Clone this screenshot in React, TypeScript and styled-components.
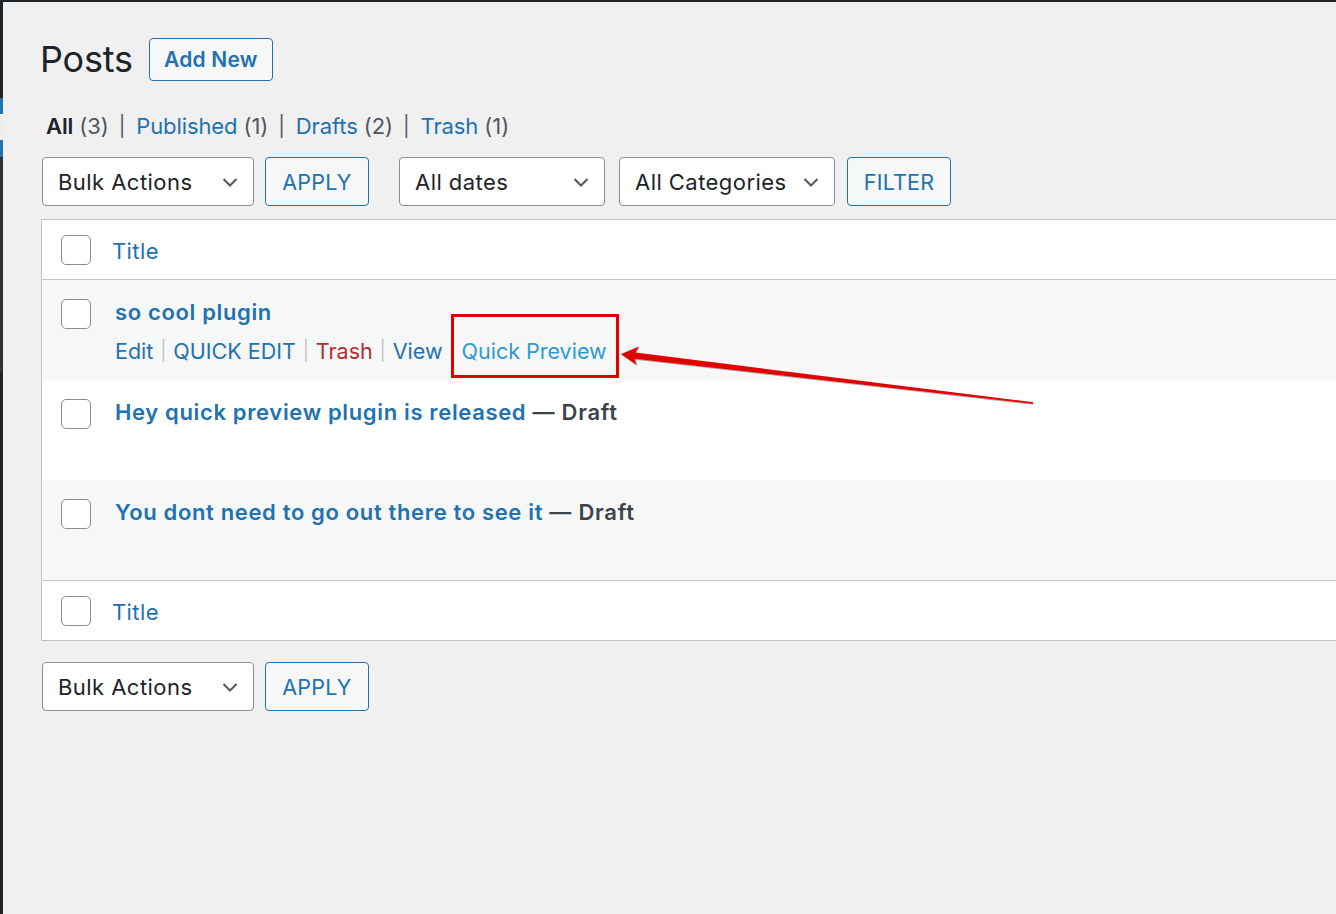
import React from "react";
import styled, { createGlobalStyle } from "styled-components";

const GlobalStyle = createGlobalStyle`
  html, body { margin: 0; padding: 0; background: #f0f0f1; overflow: hidden; }
  body { font-family: Inter, "Open Sans", "Liberation Sans", sans-serif; color: #1d2327; }
  * { box-sizing: border-box; }
`;

const Screen = styled.div`
  position: relative;
  width: 1336px;
  height: 914px;
  display: flex;
  flex-direction: column;
  overflow: hidden;
`;

const TopBar = styled.div`
  height: 2px;
  background: #1d2327;
  flex: none;
`;

const Body = styled.div`
  flex: 1;
  display: flex;
`;

const Sidebar = styled.div`
  width: 3px;
  flex: none;
  display: flex;
  flex-direction: column;
`;

const SideSeg = styled.div<{ $h?: number; $c: string }>`
  background: ${(p) => p.$c};
  height: ${(p) => (p.$h ? `${p.$h}px` : "auto")};
  flex: ${(p) => (p.$h ? "none" : "1")};
`;

const Main = styled.main`
  flex: 1;
  padding: 36px 0 0 39px;
  min-width: 0;
`;

const HeadingRow = styled.div`
  display: flex;
  align-items: center;
  gap: 16px;
  height: 43px;
`;

const Title = styled.h1`
  margin: 0 0 0 -2px;
  font-size: 36px;
  font-weight: 400;
  color: #1d2327;
  line-height: 43px;
  letter-spacing: -0.2px;
`;

const OutlineButton = styled.button<{ $w: number; $h: number; $bold?: boolean }>`
  width: ${(p) => p.$w}px;
  height: ${(p) => p.$h}px;
  border: 1px solid #2271b1;
  border-radius: 4px;
  background: #f6f7f7;
  color: #2271b1;
  font-family: inherit;
  font-size: ${(p) => (p.$bold ? 21 : 21.5)}px;
  font-weight: ${(p) => (p.$bold ? 600 : 400)};
  letter-spacing: 0.2px;
  padding: 0;
  cursor: pointer;
`;

const StatusList = styled.ul`
  list-style: none;
  margin: 30px 0 0;
  padding: 0 0 0 4px;
  display: flex;
  align-items: center;
  height: 30px;
  font-size: 22px;
  letter-spacing: -0.1px;
  color: #50575e;
`;

const StatusItem = styled.li`
  display: flex;
  align-items: center;
  white-space: pre;
`;

const StatusLink = styled.a<{ $current?: boolean }>`
  color: ${(p) => (p.$current ? "#1d2327" : "#2271b1")};
  font-weight: ${(p) => (p.$current ? 600 : 400)};
  text-decoration: none;
`;

const Count = styled.span`
  color: #50575e;
`;

const Pipe = styled.span`
  color: #50575e;
  padding: 0 11px 0 10px;
  font-size: 20px;
`;

const Toolbar = styled.div<{ $mt: number }>`
  display: flex;
  align-items: center;
  margin-top: ${(p) => p.$mt}px;
  height: 49px;
`;

const SelectBox = styled.div<{ $w: number }>`
  width: ${(p) => p.$w}px;
  height: 49px;
  border: 1px solid #8c8f94;
  border-radius: 4px;
  background: #fff;
  display: flex;
  align-items: center;
  justify-content: space-between;
  padding: 0 13px 0 15px;
  font-size: 22px;
  letter-spacing: 0.45px;
  color: #1d2327;
  flex: none;
`;

const Gap = styled.div<{ $w: number }>`
  width: ${(p) => p.$w}px;
  flex: none;
`;

const Chevron = () => (
  <svg width="20" height="20" viewBox="0 0 20 20" aria-hidden>
    <polyline points="3.5,7 10,13.5 16.5,7" fill="none" stroke="#50575e" strokeWidth="2" />
  </svg>
);

const Table = styled.div`
  margin: 13px -20px 0 -1px;
  border: 1px solid #c3c4c7;
  border-right: none;
  background: #fff;
`;

const HeadRow = styled.div<{ $top?: boolean }>`
  display: flex;
  align-items: center;
  height: 60px;
  padding-left: 19px;
  background: #fff;
  ${(p) => (p.$top ? "border-bottom: 1px solid #c3c4c7;" : "border-top: 1px solid #c3c4c7;")}
`;

const Check = styled.span`
  width: 30px;
  height: 30px;
  border: 1px solid #8c8f94;
  border-radius: 5px;
  background: #fff;
  flex: none;
`;

const HeadTitle = styled.a`
  margin-left: 21px;
  padding-top: 3px;
  font-size: 22px;
  letter-spacing: 0.4px;
  color: #2271b1;
  text-decoration: none;
`;

const PostRow = styled.div<{ $striped?: boolean }>`
  display: flex;
  align-items: flex-start;
  height: 100px;
  padding: 19px 0 0 19px;
  background: ${(p) => (p.$striped ? "#f6f7f7" : "#fff")};
`;

const PostBody = styled.div`
  margin-left: 24px;
  margin-top: -1px;
  display: flex;
  flex-direction: column;
`;

const PostTitle = styled.div`
  font-size: 22px;
  line-height: 28px;
  font-weight: 600;
  letter-spacing: 0.75px;
  color: #3c434a;
  white-space: pre;
`;

const PostLink = styled.a`
  color: #2271b1;
  text-decoration: none;
  letter-spacing: 0.65px;
`;

const Actions = styled.div`
  margin-top: 11px;
  display: flex;
  align-items: center;
  font-size: 21.5px;
  line-height: 28px;
`;

const Action = styled.a<{ $tone?: "danger" | "preview" }>`
  color: ${(p) =>
    p.$tone === "danger" ? "#b32d2e" : p.$tone === "preview" ? "#2d9bd3" : "#2271b1"};
  text-decoration: none;
  position: relative;
`;

const Sep = styled.span<{ $w?: number }>`
  color: #c3c4c7;
  font-size: 19px;
  width: ${(p) => p.$w ?? 20}px;
  text-align: center;
  flex: none;
`;

const Highlight = styled.span`
  position: absolute;
  left: -11px;
  right: -12px;
  top: -23px;
  bottom: -13px;
  border: 3px solid #e00000;
  pointer-events: none;
`;

const ArrowSvg = styled.svg`
  position: absolute;
  left: 600px;
  top: 330px;
  width: 450px;
  height: 80px;
  pointer-events: none;
  overflow: visible;
`;

const posts = [
  { title: "Hey quick preview plugin is released", striped: false },
  { title: "You dont need to go out there to see it", striped: true },
];

export default function App() {
  return (
    <>
      <GlobalStyle />
      <Screen>
        <TopBar />
        <Body>
          <Sidebar>
            <SideSeg $h={96} $c="#1d2327" />
            <SideSeg $h={16} $c="#2271b1" />
            <SideSeg $h={26} $c="#e8eef3" />
            <SideSeg $h={17} $c="#2271b1" />
            <SideSeg $h={215} $c="#2c3338" />
            <SideSeg $c="#1d2327" />
          </Sidebar>
          <Main>
            <HeadingRow>
              <Title>Posts</Title>
              <OutlineButton $w={124} $h={43} $bold>Add New</OutlineButton>
            </HeadingRow>

            <StatusList>
              <StatusItem>
                <StatusLink $current>All</StatusLink>
                <Count> (3)</Count>
                <Pipe>|</Pipe>
              </StatusItem>
              <StatusItem>
                <StatusLink>Published</StatusLink>
                <Count> (1)</Count>
                <Pipe>|</Pipe>
              </StatusItem>
              <StatusItem>
                <StatusLink>Drafts</StatusLink>
                <Count> (2)</Count>
                <Pipe>|</Pipe>
              </StatusItem>
              <StatusItem>
                <StatusLink>Trash</StatusLink>
                <Count> (1)</Count>
              </StatusItem>
            </StatusList>

            <Toolbar $mt={16}>
              <SelectBox $w={212}>
                Bulk Actions
                <Chevron />
              </SelectBox>
              <Gap $w={11} />
              <OutlineButton $w={104} $h={49}>APPLY</OutlineButton>
              <Gap $w={30} />
              <SelectBox $w={206}>
                All dates
                <Chevron />
              </SelectBox>
              <Gap $w={14} />
              <SelectBox $w={216}>
                All Categories
                <Chevron />
              </SelectBox>
              <Gap $w={12} />
              <OutlineButton $w={104} $h={49}>FILTER</OutlineButton>
            </Toolbar>

            <Table>
              <HeadRow $top>
                <Check />
                <HeadTitle>Title</HeadTitle>
              </HeadRow>

              <PostRow $striped>
                <Check />
                <PostBody>
                  <PostTitle>
                    <PostLink>so cool plugin</PostLink>
                  </PostTitle>
                  <Actions>
                    <Action>Edit</Action>
                    <Sep>|</Sep>
                    <Action>QUICK EDIT</Action>
                    <Sep>|</Sep>
                    <Action $tone="danger">Trash</Action>
                    <Sep>|</Sep>
                    <Action>View</Action>
                    <Sep $w={19}>|</Sep>
                    <Action $tone="preview">
                      Quick Preview
                      <Highlight />
                    </Action>
                  </Actions>
                </PostBody>
              </PostRow>

              {posts.map((p) => (
                <PostRow key={p.title} $striped={p.striped}>
                  <Check />
                  <PostBody>
                    <PostTitle>
                      <PostLink>{p.title}</PostLink> — Draft
                    </PostTitle>
                  </PostBody>
                </PostRow>
              ))}

              <HeadRow>
                <Check />
                <HeadTitle>Title</HeadTitle>
              </HeadRow>
            </Table>

            <Toolbar $mt={21}>
              <SelectBox $w={212}>
                Bulk Actions
                <Chevron />
              </SelectBox>
              <Gap $w={11} />
              <OutlineButton $w={104} $h={49}>APPLY</OutlineButton>
            </Toolbar>
          </Main>
        </Body>

        <ArrowSvg viewBox="0 0 450 80">
          <defs>
            <filter id="arrowShadow" x="-5%" y="-50%" width="110%" height="200%">
              <feDropShadow dx="0.5" dy="1" stdDeviation="0.6" floodColor="#000" floodOpacity="0.35" />
            </filter>
          </defs>
          <polygon
            filter="url(#arrowShadow)"
            fill="#e00000"
            points="21,24 39,16.5 35.3,22.6 433.1,72.2 432.9,73.8 34.5,28.8 36.8,35"
          />
        </ArrowSvg>
      </Screen>
    </>
  );
}
